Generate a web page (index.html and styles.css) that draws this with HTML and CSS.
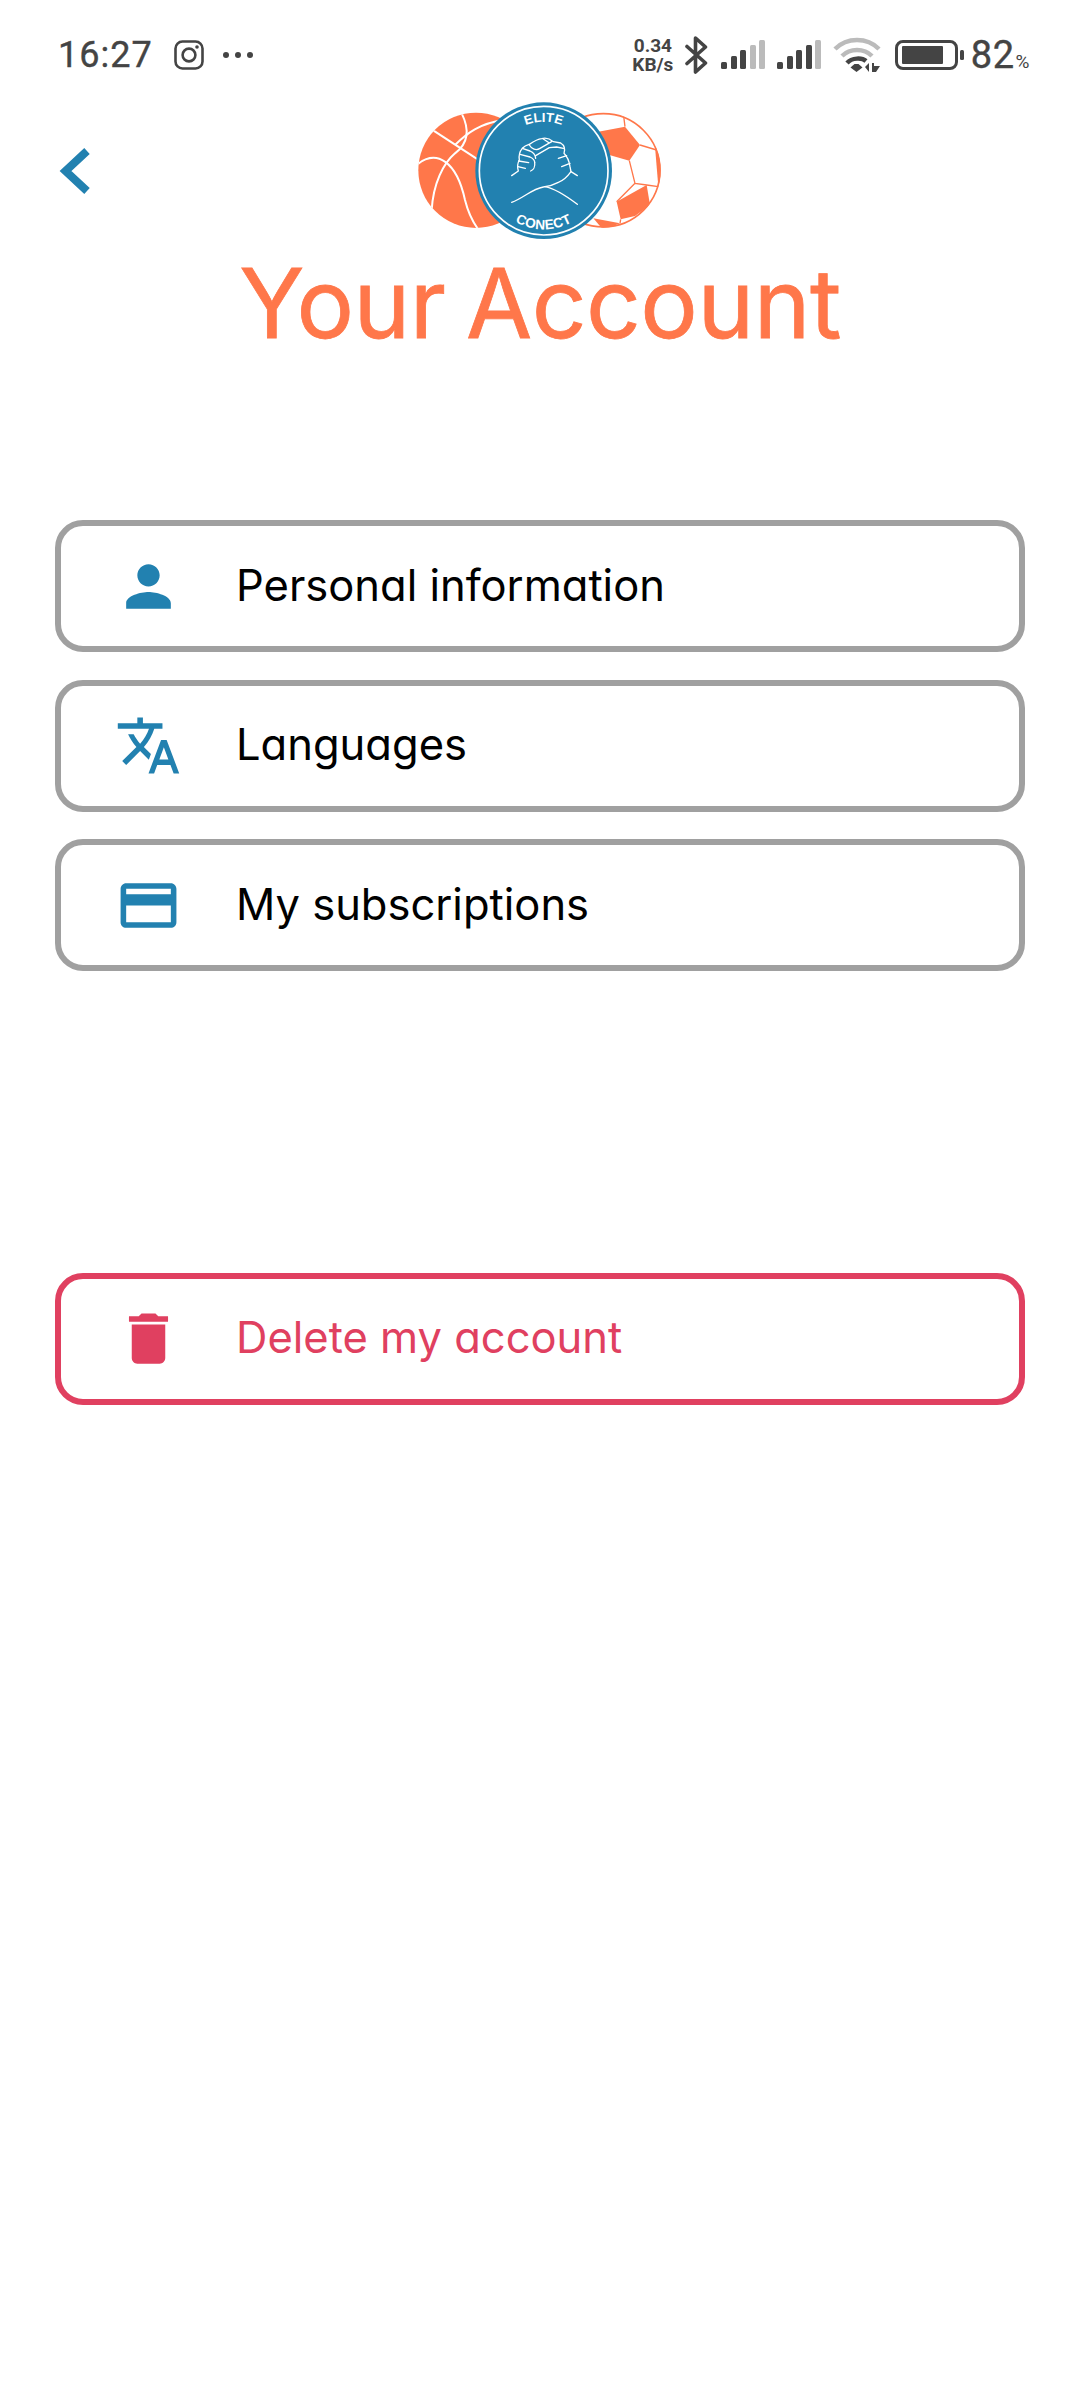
FILE: index.html
```html
<!DOCTYPE html>
<html lang="en">
<head>
<meta charset="utf-8">
<title>Your Account</title>
<link rel="stylesheet" href="styles.css">
</head>
<body>
<div class="status">
  <span class="time">16:27</span>
  <svg class="ig" viewBox="0 0 30 30"><rect x="1.5" y="1.5" width="27" height="27" rx="7" fill="none" stroke="#444" stroke-width="2.6"/><circle cx="15" cy="15" r="6.4" fill="none" stroke="#444" stroke-width="2.6"/><circle cx="23" cy="7" r="1.8" fill="#444"/></svg>
  <svg class="dots" viewBox="0 0 32 8"><circle cx="4" cy="4" r="3" fill="#444"/><circle cx="16" cy="4" r="3" fill="#444"/><circle cx="28" cy="4" r="3" fill="#444"/></svg>
  <div class="status-right">
    <div class="speed"><span>0.34</span><span>KB/s</span></div>
    <svg class="bt" viewBox="0 0 25 38"><path d="M3 10.500L21.500 27 11.500 36V2l10 9L3 27.500" fill="none" stroke="#444" stroke-width="3.600" stroke-linejoin="round" stroke-linecap="round"/></svg>
    <svg class="sig" viewBox="0 0 44 30"><rect x="0" y="22" width="6" height="7" rx="1.500" fill="#444"/><rect x="10" y="16" width="6" height="13" rx="1.500" fill="#444"/><rect x="19" y="10" width="6" height="19" rx="1.500" fill="#444"/><rect x="29" y="5" width="6" height="24" rx="1.500" fill="#bbb"/><rect x="38" y="0" width="6" height="29" rx="1.500" fill="#bbb"/></svg>
    <svg class="sig" viewBox="0 0 44 30"><rect x="0" y="22" width="6" height="7" rx="1.500" fill="#444"/><rect x="10" y="16" width="6" height="13" rx="1.500" fill="#444"/><rect x="19" y="10" width="6" height="19" rx="1.500" fill="#444"/><rect x="29" y="5" width="6" height="24" rx="1.500" fill="#444"/><rect x="38" y="0" width="6" height="29" rx="1.500" fill="#bbb"/></svg>
    <svg class="wifi" viewBox="0 0 48 36"><path d="M2 12C14 0 34 0 46 12" fill="none" stroke="#bbb" stroke-width="4.500"/><path d="M9 19C17 11 31 11 39 19" fill="none" stroke="#bbb" stroke-width="4.500"/><path d="M14 26C19 20.500 29 20.500 33 24" fill="none" stroke="#444" stroke-width="4.500"/><path d="M17.500 30.500l4-3.500h4l4 3.500-6 4.500z" fill="#444"/><path d="M32 30l4-4v9zM39 35v-9h2v3h6l-4 6h-4z" fill="#444"/></svg>
    <svg class="batt" viewBox="0 0 70 30"><rect x="1.500" y="1.500" width="60" height="27" rx="6.500" fill="none" stroke="#444" stroke-width="3"/><rect x="7" y="6" width="41" height="18" rx="1" fill="#444"/><rect x="65" y="10" width="4" height="10" rx="1.500" fill="#444"/></svg>
    <span class="pct">82<small>%</small></span>
  </div>
</div>

<header class="head">
  <svg class="back" viewBox="0 0 32 50"><path d="M28 5L6.500 25 28 45" fill="none" stroke="#2281b0" stroke-width="8"/></svg>
  <svg class="logo" viewBox="0 0 900 480">
    <defs>
      <clipPath id="ballclip"><circle cx="258" cy="241" r="173"/></clipPath>
      <clipPath id="soccerclip"><circle cx="640" cy="241" r="172"/></clipPath>
      <path id="arc-top" d="M314 242a147 147 0 0 1 294 0"/>
      <path id="arc-bottom" d="M285 242a176 176 0 0 0 352 0"/>
    </defs>
    <circle cx="258" cy="241" r="173" fill="#ff774a"/>
    <g clip-path="url(#ballclip)" fill="none" stroke="#fff" stroke-width="6">
      <path d="M125 118L300 232"/>
      <path d="M215 70C240 120 235 160 195 190C160 220 130 280 125 360"/>
      <path d="M195 165C230 130 270 100 340 90"/>
      <path d="M80 225C140 175 200 215 225 330C235 370 250 400 270 425"/>
    </g>
    <circle cx="640" cy="241" r="170" fill="#fff" stroke="#ff774a" stroke-width="5"/>
    <g clip-path="url(#soccerclip)">
      <path d="M625 125L705 110L750 165L718 212L640 190Z" fill="#ff774a"/>
      <path d="M680 335L770 285L780 345L735 378L692 388Z" fill="#ff774a"/>
      <path d="M795 170L830 170V300L805 290Z" fill="#ff774a"/>
      <path d="M610 385L690 400L640 420Z" fill="#ff774a"/>
      <path d="M705 110L700 70M750 165L800 180M718 212L735 280L770 285L805 290M735 280L680 335M692 388L690 400M780 345L790 370" fill="none" stroke="#ff774a" stroke-width="4"/>
    </g>
    <circle cx="461" cy="242" r="205" fill="#2281b0"/>
    <circle cx="461" cy="242" r="193" fill="none" stroke="#fff" stroke-width="5"/>
    <text class="logo-text"><textPath href="#arc-top" startOffset="50%" text-anchor="middle">ELITE</textPath></text>
    <text class="logo-text logo-text-low"><textPath href="#arc-bottom" startOffset="50%" text-anchor="middle">CONECT</textPath></text>
    <g transform="translate(300 105)" fill="none" stroke="#fff" stroke-width="4" stroke-linecap="round" stroke-linejoin="round">
      <path d="M65 152L85 138C81 125 84 112 88 105C86 92 90 78 97 70C105 62 112 60 118 58C130 50 145 42 155 41C165 38 178 40 190 50L212 54C222 60 226 72 222 85C232 95 238 112 240 125L243 140L262 152"/>
      <path d="M243 140C232 155 218 168 205 172C190 180 178 184 160 186C125 192 100 220 65 232"/>
      <path d="M165 185C190 190 225 210 262 238"/>
      <path d="M97 70L120 78C130 82 136 90 137 100M90 88L120 96C128 100 134 105 134 112M86 108L116 113M84 125L106 130"/>
      <path d="M118 60C125 72 138 78 150 70L185 50M160 42L178 54"/>
      <path d="M137 92L178 68L200 66L220 70M134 112C136 125 130 135 122 138M205 100L230 92M215 125L240 115"/>
    </g>
  </svg>
</header>

<h1 class="title">Your Account</h1>

<main class="menu">
  <div class="row">
    <svg class="icon" viewBox="0 0 24 24"><path d="M12 12c2.210 0 4-1.790 4-4s-1.790-4-4-4-4 1.790-4 4 1.790 4 4 4zm0 2c-2.670 0-8 1.340-8 4v2h16v-2c0-2.660-5.330-4-8-4z"/></svg>
    <span class="label">Personal information</span>
  </div>
  <div class="row">
    <svg class="icon" viewBox="0 0 24 24"><path d="M12.870 15.070l-2.540-2.510.03-.03c1.740-1.940 2.980-4.170 3.710-6.530H17V4h-7V2H8v2H1v1.990h11.170C11.500 7.920 10.440 9.750 9 11.350 8.070 10.320 7.300 9.190 6.690 8h-2c.73 1.630 1.730 3.170 2.980 4.560l-5.090 5.020L4 19l5-5 3.110 3.110.76-2.040zM18.500 10h-2L12 22h2l1.120-3h4.750L21 22h2l-4.500-12zm-2.620 7l1.620-4.330L19.120 17h-3.240z"/></svg>
    <span class="label">Languages</span>
  </div>
  <div class="row">
    <svg class="icon" viewBox="0 0 24 24"><path d="M20 4H4c-1.110 0-1.990.89-1.990 2L2 18c0 1.110.89 2 2 2h16c1.110 0 2-.89 2-2V6c0-1.110-.89-2-2-2zm0 14H4v-6h16v6zm0-10H4V6h16v2z"/></svg>
    <span class="label">My subscriptions</span>
  </div>
  <div class="row danger">
    <svg class="icon" viewBox="0 0 24 24"><path d="M6 19c0 1.100.9 2 2 2h8c1.100 0 2-.9 2-2V7H6v12zM19 4h-3.500l-1-1h-5l-1 1H5v2h14V4z"/></svg>
    <span class="label">Delete my account</span>
  </div>
</main>
</body>
</html>
```

FILE: styles.css
```css
* { box-sizing: border-box; }
html, body { margin: 0; padding: 0; background: #fff; }
body { width: 1080px; height: 2400px; overflow: hidden; font-family: Inter, "Liberation Sans", sans-serif; font-feature-settings: "cv11"; }

.status { display: flex; align-items: center; height: 110px; padding: 0 50px 0 58px; color: #444; font-family: Roboto, sans-serif; }
.time { font-size: 36px; font-weight: 400; letter-spacing: 1px; -webkit-text-stroke: 0.4px #444; }
.ig { width: 30px; height: 30px; margin-left: 21px; }
.dots { width: 32px; height: 8px; margin-left: 18px; }
.status-right { display: flex; align-items: center; margin-left: auto; height: 40px; }
.speed { display: flex; flex-direction: column; align-items: center; width: 42px; font-size: 19px; font-weight: 700; line-height: 19px; }
.bt { width: 25px; height: 38px; margin-left: 10px; }
.sig { width: 44px; height: 30px; margin-left: 12px; }
.wifi { width: 48px; height: 36px; margin-left: 12px; }
.batt { width: 70px; height: 30px; margin-left: 14px; }
.pct { font-size: 38px; font-weight: 400; margin-left: 6px; letter-spacing: 0.5px; -webkit-text-stroke: 0.4px #444; }
.pct small { font-size: 19px; margin-left: 1px; -webkit-text-stroke: 0; }

.head { display: flex; justify-content: center; position: relative; height: 153px; margin-top: -20px; }
.back { position: absolute; left: 59px; top: 56px; width: 32px; height: 50px; }
.logo { width: 300px; height: 160px; flex: none; }
.logo-text { font-family: "Liberation Sans", sans-serif; font-size: 39px; font-weight: 700; fill: #fff; }
.logo-text-low { font-size: 41px; letter-spacing: 1px; }

.title { margin: 0; text-align: center; color: #ff774a; font-size: 96px; font-weight: 400; line-height: 120px; letter-spacing: -0.5px; word-spacing: -6px; -webkit-text-stroke: 0.8px #ff774a; }

.menu { display: flex; flex-direction: column; gap: 27.5px; margin: 0 55px; padding-top: 157px; }
.row { display: flex; align-items: center; height: 132px; border: 6px solid #a0a0a0; border-radius: 28px; padding-left: 38px; font-size: 43.5px; color: #000; }
.row .icon { width: 67px; height: 67px; margin-left: 16px; margin-right: 54px; fill: #2281b0; flex: none; }
.label { margin-bottom: 3px; }
.danger { margin-top: 274px; border-color: #e04060; color: #e04060; }
.danger .icon { fill: #e04060; }
```
